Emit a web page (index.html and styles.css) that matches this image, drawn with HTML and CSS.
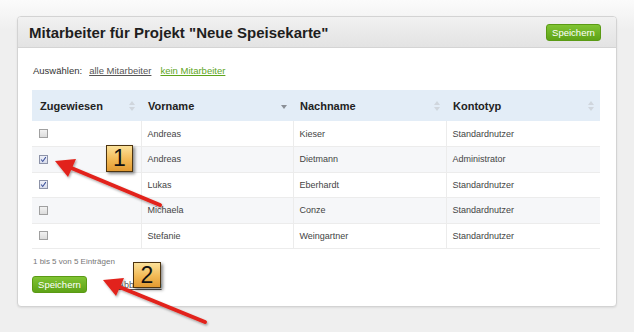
FILE: index.html
```html
<!DOCTYPE html>
<html lang="de">
<head>
<meta charset="utf-8">
<title>Mitarbeiter für Projekt</title>
<link rel="stylesheet" href="styles.css">
</head>
<body>
<div class="page">
  <section class="panel">
    <header class="panel-head">
      <h1 class="title">Mitarbeiter für Projekt "Neue Speisekarte"</h1>
      <button class="btn">Speichern</button>
    </header>
    <div class="panel-body">
      <div class="select-line">
        <span class="label">Auswählen:</span>
        <a class="link link-gray" href="#">alle Mitarbeiter</a>
        <a class="link link-green" href="#">kein Mitarbeiter</a>
      </div>
      <table class="grid">
        <colgroup>
          <col class="c1"><col class="c2"><col class="c3"><col class="c4">
        </colgroup>
        <thead>
          <tr>
            <th><div class="th-in"><span>Zugewiesen</span><span class="sort both"></span></div></th>
            <th><div class="th-in"><span>Vorname</span><span class="sort down"></span></div></th>
            <th><div class="th-in"><span>Nachname</span><span class="sort both"></span></div></th>
            <th><div class="th-in"><span>Kontotyp</span><span class="sort both"></span></div></th>
          </tr>
        </thead>
        <tbody>
          <tr><td><span class="cb"></span></td><td>Andreas</td><td>Kieser</td><td>Standardnutzer</td></tr>
          <tr class="alt"><td><span class="cb on"><svg viewBox="0 0 9 9" width="7" height="7"><path d="M1.5 4.5 L3.5 7 L7.5 1.5" fill="none" stroke="#3a4f9a" stroke-width="1.3"/></svg></span></td><td>Andreas</td><td>Dietmann</td><td>Administrator</td></tr>
          <tr><td><span class="cb on"><svg viewBox="0 0 9 9" width="7" height="7"><path d="M1.5 4.5 L3.5 7 L7.5 1.5" fill="none" stroke="#3a4f9a" stroke-width="1.3"/></svg></span></td><td>Lukas</td><td>Eberhardt</td><td>Standardnutzer</td></tr>
          <tr class="alt"><td><span class="cb"></span></td><td>Michaela</td><td>Conze</td><td>Standardnutzer</td></tr>
          <tr><td><span class="cb"></span></td><td>Stefanie</td><td>Weingartner</td><td>Standardnutzer</td></tr>
        </tbody>
      </table>
      <div class="info">1 bis 5 von 5 Einträgen</div>
      <div class="actions">
        <button class="btn">Speichern</button>
        <a class="link link-gray" href="#">Abbrechen</a>
      </div>
    </div>
  </section>
</div>

<svg class="arrows" width="634" height="332" viewBox="0 0 634 332">
  <defs>
    <filter id="sh" x="-20%" y="-20%" width="140%" height="140%">
      <feDropShadow dx="1" dy="1.5" stdDeviation="1.2" flood-color="#000" flood-opacity="0.35"/>
    </filter>
  </defs>
  <g filter="url(#sh)">
    <line x1="69" y1="167" x2="160" y2="205" stroke="#e2231a" stroke-width="4" stroke-linecap="round"/>
    <polygon points="55,161 76,159 68,177" fill="#e2231a"/>
    <line x1="117" y1="286" x2="205" y2="322" stroke="#e2231a" stroke-width="4" stroke-linecap="round"/>
    <polygon points="103,280 124,278 116,296" fill="#e2231a"/>
  </g>
</svg>
<div class="badge b1">1</div>
<div class="badge b2">2</div>
</body>
</html>
```
FILE: styles.css
```css
html, body {
  margin: 0;
  padding: 0;
}
body {
  width: 634px;
  height: 332px;
  overflow: hidden;
  position: relative;
  background: linear-gradient(#fbfbfb 0, #efefef 30px, #efefef 100%);
  font-family: "Liberation Sans", Arial, sans-serif;
  color: #333;
}
.page {
  padding: 16px 0 0 17px;
}
.panel {
  box-sizing: border-box;
  width: 600px;
  height: 291px;
  background: #fff;
  border: 1px solid #d3d3d3;
  border-radius: 4px;
  box-shadow: 0 1px 2px rgba(0,0,0,0.08);
  overflow: hidden;
}
.panel-head {
  box-sizing: border-box;
  height: 31px;
  display: flex;
  align-items: center;
  justify-content: space-between;
  padding: 1px 15px 0 11px;
  background: linear-gradient(#f1f1f1, #e3e3e3);
  border-bottom: 1px solid #d4d4d4;
}
.title {
  margin: 0;
  font-size: 15px;
  font-weight: bold;
  color: #1e1e1e;
  line-height: 18px;
}
.btn {
  box-sizing: border-box;
  height: 17px;
  width: 55px;
  padding: 0;
  border: 1px solid #5a9a14;
  border-radius: 3px;
  background: linear-gradient(#80c433, #5ea317);
  color: #fff;
  font-family: "Liberation Sans", Arial, sans-serif;
  font-size: 9.5px;
  line-height: 15px;
  text-align: center;
}
.panel-body {
  padding: 14px 15px 0 14px;
}
.select-line {
  height: 16px;
  display: flex;
  align-items: center;
  font-size: 9.5px;
  gap: 7px;
  padding-left: 1px;
  color: #333;
}
.link {
  text-decoration: underline;
}
.link-gray {
  color: #555;
}
.link-green {
  color: #5da51c;
  margin-left: 2px;
}
.grid {
  margin-top: 12px;
  width: 568px;
  border-collapse: collapse;
  table-layout: fixed;
}
.c1 { width: 109px; }
.c2 { width: 152px; }
.c3 { width: 153px; }
.c4 { width: 154px; }
.grid thead tr {
  height: 31px;
  background: #e3edf7;
}
.grid th {
  padding: 0 6px 0 8px;
  text-align: left;
  font-size: 11px;
  font-weight: bold;
  color: #222;
}
.grid th + th {
  padding-left: 7px;
}
.th-in {
  display: flex;
  align-items: center;
  justify-content: space-between;
}
.sort {
  display: inline-block;
  width: 6px;
  height: 10px;
  position: relative;
}
.sort.both::before, .sort.both::after {
  content: "";
  position: absolute;
  left: 0;
  border-left: 3px solid transparent;
  border-right: 3px solid transparent;
}
.sort.both::before {
  top: 0;
  border-bottom: 4px solid #d0d6dd;
}
.sort.both::after {
  bottom: 0;
  border-top: 4px solid #d0d6dd;
}
.sort.down::after {
  content: "";
  position: absolute;
  left: 0;
  top: 4px;
  border-left: 3px solid transparent;
  border-right: 3px solid transparent;
  border-top: 4px solid #8a8f96;
}
.grid tbody tr {
  height: 25.5px;
  background: #fff;
  border-bottom: 1px solid #ececec;
}
.grid tbody tr.alt {
  background: #f6f7f9;
}
.grid td {
  padding: 0 6px;
  font-size: 9px;
  color: #444;
  border-left: 1px solid #ececec;
  vertical-align: middle;
}
.grid td:first-child {
  border-left: none;
  padding-left: 7px;
}
.cb {
  box-sizing: border-box;
  display: flex;
  align-items: center;
  justify-content: center;
  width: 9px;
  height: 9px;
  border: 1px solid #a0a0a0;
  background: linear-gradient(#f2f2f2, #dcdcdc);
}
.cb.on {
  border-color: #8d93a8;
  background: linear-gradient(#eef0f8, #d8dceb);
}
.info {
  margin-top: 7px;
  height: 12px;
  line-height: 12px;
  font-size: 8px;
  color: #777;
  padding-left: 1px;
}
.actions {
  margin-top: 8px;
  display: flex;
  align-items: center;
  gap: 31px;
}
.actions .link {
  font-size: 9px;
}
.arrows {
  position: absolute;
  left: 0;
  top: 0;
}
.badge {
  position: absolute;
  box-sizing: border-box;
  width: 27px;
  height: 27px;
  border: 1px solid #4d3410;
  background: linear-gradient(#fbe19a, #f2b955 55%, #e29a31);
  box-shadow: 2px 2px 3px rgba(0,0,0,0.45);
  font-family: "Liberation Sans", Arial, sans-serif;
  font-size: 23px;
  line-height: 25px;
  text-align: center;
  color: #111;
}
.b1 {
  left: 106px;
  top: 145px;
}
.b2 {
  left: 133px;
  top: 262px;
  width: 28px;
  height: 26px;
  line-height: 24px;
}
```
